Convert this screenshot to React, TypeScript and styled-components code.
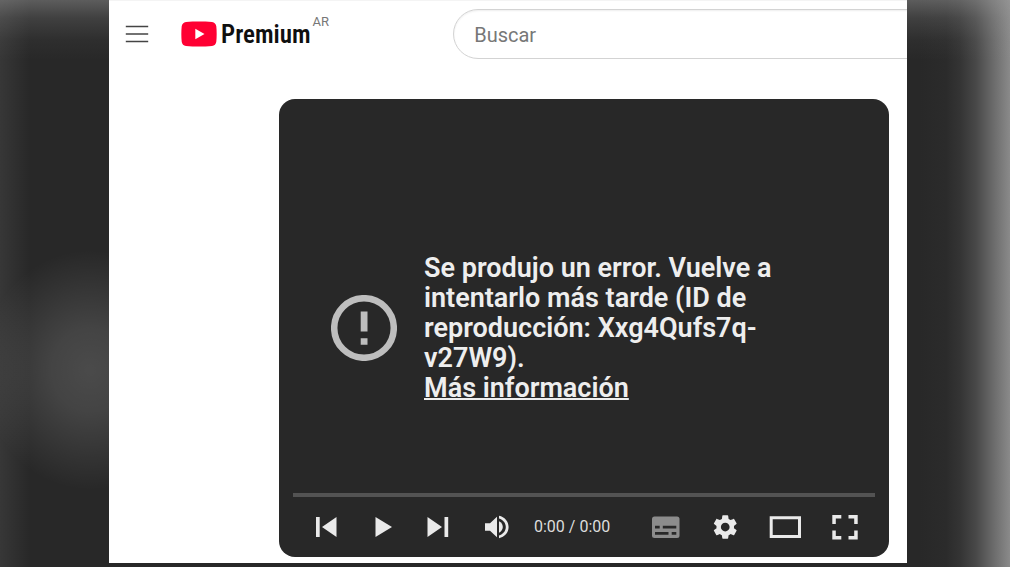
import React from "react";
import styled, { createGlobalStyle } from "styled-components";

const GlobalStyle = createGlobalStyle`
  * { box-sizing: border-box; }
  body { margin: 0; background: #282828; font-family: Roboto, "Liberation Sans", sans-serif; }
`;

const Backdrop = styled.div`
  min-height: 100vh;
  display: grid;
  grid-template-columns: 109fr 798fr 103fr;
  padding-bottom: 4px;
  overflow: hidden;
  background:
    linear-gradient(to bottom, rgba(160, 160, 160, 0.44) 0, rgba(160, 160, 160, 0.2) 18px, rgba(160, 160, 160, 0.05) 40px, transparent 60px),
    radial-gradient(110px 120px at 90px 370px, rgba(255, 255, 255, 0.16) 0, rgba(255, 255, 255, 0.13) 35%, rgba(255, 255, 255, 0.04) 80%, transparent 100%),
    linear-gradient(to right, rgba(255, 255, 255, 0.07) 0, transparent 30px),
    linear-gradient(to left, #8a8a8a 0, #6c6c6c 16px, #484848 34px, #343434 50px, #2b2b2b 64px, #282828 90px);
`;

const Page = styled.main`
  grid-column: 2;
  min-width: 0;
  overflow: hidden;
  background: #fff;
  border-top: 1px solid #f4f4f4;
  padding-bottom: 6px;
`;

const Header = styled.header`
  display: flex;
  align-items: flex-start;
  padding: 8px 0 9px 16px;
`;

const MenuButton = styled.button`
  display: flex;
  align-items: center;
  width: 24px;
  height: 50px;
  margin-right: 32px;
  padding: 0;
  border: 0;
  background: none;
`;

const Brand = styled.a`
  display: flex;
  align-items: center;
  gap: 4px;
  height: 50px;
  color: #0f0f0f;
  text-decoration: none;
`;

const BrandName = styled.span`
  padding-top: 2px;
  font: 600 25px/32px "Liberation Sans Narrow", "Roboto Condensed", "DejaVu Sans Condensed", sans-serif;
`;

const Country = styled.span`
  width: 18px;
  margin: 5px 0 0 2px;
  font-size: 13px;
  line-height: 16px;
  color: #777;
`;

const SearchForm = styled.form`
  flex: none;
  width: 62%;
  margin-left: auto;
  margin-right: -31px;
`;

const SearchInput = styled.input`
  display: block;
  width: 100%;
  height: 50px;
  padding: 2px 20px 0;
  border: 1px solid #d3d3d3;
  border-radius: 25px;
  box-shadow: inset 0 1px 2px #eee;
  background: #fff;
  font: 20px/24px Roboto, sans-serif;
  color: #111;
  outline: none;
  &::placeholder { color: #777; opacity: 1; }
`;

const Player = styled.section`
  margin: 31px 18px 0 170px;
  padding: 0 14px 6px;
  border-radius: 16px;
  background: #282828;
  color: #eee;
`;

const ErrorPanel = styled.div`
  display: flex;
  align-items: center;
  gap: 27px;
  padding: 154px 0 90px 38px;
`;

const Message = styled.p`
  max-width: 370px;
  margin: 0;
  font-size: 27px;
  font-weight: 600;
  line-height: 30px;
  color: #eee;
`;

const MoreLink = styled.a`
  color: inherit;
  text-decoration: underline;
  text-decoration-thickness: 2px;
`;

const Track = styled.div`
  height: 4px;
  margin-bottom: 6px;
  background: #535353;
`;

const Controls = styled.div`
  display: flex;
  align-items: center;
  padding-left: 5px;
`;

const ControlButton = styled.button<{ $width: number }>`
  display: block;
  flex: none;
  width: ${(p) => p.$width}px;
  height: 48px;
  padding: 0;
  border: 0;
  background: none;
  color: #eaeaea;
  svg { display: block; }
`;

const Time = styled.span`
  margin: 0 auto 0 12px;
  font-size: 16px;
  line-height: 20px;
  color: #ddd;
  white-space: nowrap;
`;

function Control({ label, width, children }: { label: string; width: number; children: React.ReactNode }) {
  return (
    <ControlButton type="button" aria-label={label} $width={width}>
      <svg width={width} height="48" viewBox={`0 0 ${width} 48`} fill="currentColor">
        {children}
      </svg>
    </ControlButton>
  );
}

export default function App() {
  return (
    <>
      <GlobalStyle />
      <Backdrop>
        <Page>
          <Header>
            <MenuButton type="button" aria-label="Menú">
              <svg width="24" height="18" viewBox="0 0 24 18" stroke="#444" strokeWidth="1.6">
                <path d="M0.800 1.500H23.200M0.800 9H23.200M0.800 16.500H23.200" />
              </svg>
            </MenuButton>
            <Brand href="#" aria-label="Premium">
              <svg width="36" height="26" viewBox="0 0 36 26">
                <path
                  fill="#ff0033"
                  d="M5 .9C9 .4 14 .4 18 .4s9 0 13 .5c2.500.3 4 2 4.300 4.300.5 5 .5 10.600 0 15.600-.3 2.300-1.800 4-4.300 4.300-4 .5-9 .5-13 .5s-9 0-13-.5C2.500 24.800 1 23.100.7 20.800.2 15.800.2 10.200.7 5.200 1 2.900 2.500 1.200 5 .9z"
                />
                <path fill="#fff" d="M14.300 7.700v10.600l9.200-5.300z" />
              </svg>
              <BrandName>Premium</BrandName>
            </Brand>
            <Country>AR</Country>
            <SearchForm role="search">
              <SearchInput type="text" aria-label="Buscar" placeholder="Buscar" />
            </SearchForm>
          </Header>

          <Player>
            <ErrorPanel>
              <svg width="66" height="66" viewBox="0 0 66 66" fill="none">
                <circle cx="33" cy="33" r="29.800" stroke="#bebebe" strokeWidth="6.500" />
                <path fill="#bebebe" d="M29.700 16.500h6.800v20h-6.800zM29.700 43.300h6.800v6.500h-6.800z" />
              </svg>
              <Message>
                Se produjo un error. Vuelve a intentarlo más tarde (ID de reproducción: Xxg4Qufs7q-v27W9).
                <br />
                <MoreLink href="#">Más información</MoreLink>
              </Message>
            </ErrorPanel>
            <Track />
            <Controls>
              <Control label="Anterior" width={56}>
                <path d="M18 14h3.700v20H18zM38.500 14v20L24 24z" />
              </Control>
              <Control label="Reproducir" width={56}>
                <path d="M21.500 14v20L38 24z" />
              </Control>
              <Control label="Siguiente" width={56}>
                <path d="M17.500 14v20L32 24zM34.500 14h3.700v20h-3.700z" />
              </Control>
              <Control label="Silenciar" width={56}>
                <path d="M19 20.300v7.500h5l7 6.500V13.700l-7 6.600z" />
                <path d="M33 18.300c2.300 1.200 3.800 3.200 3.800 5.700s-1.500 4.500-3.800 5.700z" />
                <path d="M33 12.800v2.700c4 1.200 6.800 4.500 6.800 8.500s-2.800 7.300-6.800 8.500v2.700c5.600-1.200 9.600-5.700 9.600-11.200S38.600 14 33 12.800z" />
              </Control>
              <Time>0:00 / 0:00</Time>
              <Control label="Subtítulos" width={60}>
                <rect x="17" y="13.500" width="27.500" height="21.500" rx="2.500" fill="#8c8c8c" />
                <path fill="#282828" d="M20 22.800h4.700v2.700H20zM27.800 22.800h13.500v2.700H27.800zM20 29h13.500v2.700H20zM36.700 29h4.600v2.700h-4.600z" />
              </Control>
              <Control label="Configuración" width={60}>
                <path
                  transform="translate(15.600 9.400) scale(1.220)"
                  d="M19.140 12.940c.04-.3.060-.61.060-.94 0-.32-.02-.64-.07-.94l2.030-1.580c.18-.14.230-.41.120-.61l-1.920-3.320c-.12-.22-.37-.29-.59-.22l-2.390.96c-.5-.38-1.030-.7-1.620-.94l-.36-2.540c-.04-.24-.24-.41-.48-.41h-3.840c-.24 0-.43.170-.47.410l-.36 2.540c-.59.240-1.130.570-1.620.940l-2.390-.96c-.22-.08-.47 0-.59.220L2.740 8.870c-.12.210-.08.470.12.610l2.030 1.580c-.05.300-.09.630-.09.940s.02.640.07.940l-2.030 1.580c-.18.140-.23.410-.12.610l1.920 3.320c.12.220.37.290.59.220l2.390-.96c.5.380 1.030.700 1.620.940l.36 2.540c.05.240.24.410.48.410h3.840c.24 0 .44-.17.470-.41l.36-2.540c.59-.24 1.130-.56 1.620-.94l2.390.96c.22.080.47 0 .59-.22l1.920-3.320c.12-.22.070-.47-.12-.61l-2.010-1.580zM12 15.600c-1.980 0-3.600-1.620-3.600-3.600s1.620-3.600 3.600-3.600 3.600 1.620 3.600 3.600-1.620 3.600-3.600 3.600z"
                />
              </Control>
              <Control label="Modo cine" width={60}>
                <path fillRule="evenodd" d="M14.700 13.200h31.300v21.800H14.700zM17.700 16.200v15.800H43V16.200z" />
              </Control>
              <Control label="Pantalla completa" width={60}>
                <path d="M17.300 12h9v3.500h-5.500V21h-3.500zM33.500 12h9.200v9h-3.500v-5.500h-5.700zM17.300 27.500h3.500V33h5.500v3.500h-9zM39.200 27.500h3.500v9h-9.200V33h5.700z" />
              </Control>
            </Controls>
          </Player>
        </Page>
      </Backdrop>
    </>
  );
}
